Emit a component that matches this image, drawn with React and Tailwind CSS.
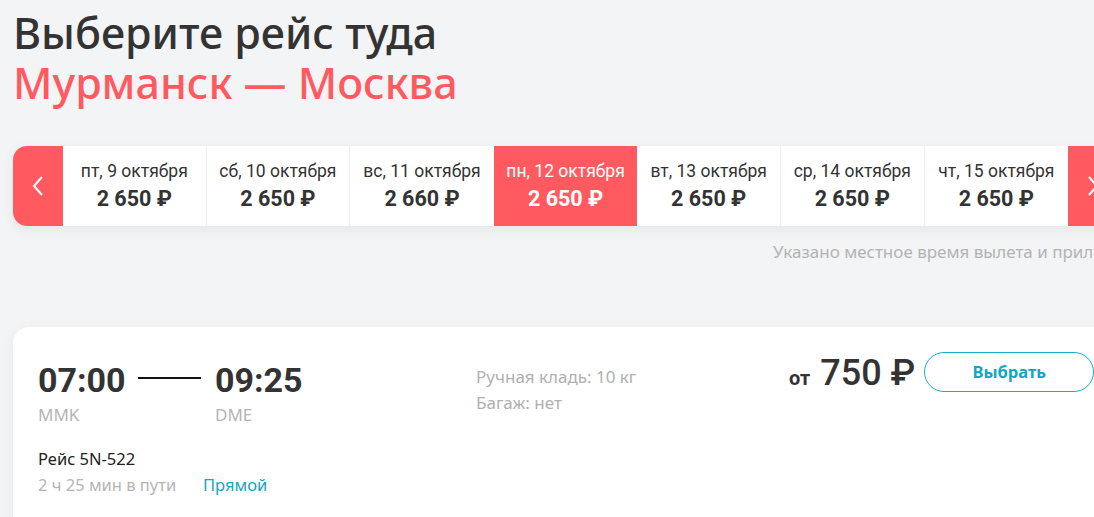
import React from "react";

const days = [
  { d: "пт, 9 октября", p: "2 650 ₽" },
  { d: "сб, 10 октября", p: "2 650 ₽" },
  { d: "вс, 11 октября", p: "2 660 ₽" },
  { d: "пн, 12 октября", p: "2 650 ₽", active: true },
  { d: "вт, 13 октября", p: "2 650 ₽" },
  { d: "ср, 14 октября", p: "2 650 ₽" },
  { d: "чт, 15 октября", p: "2 650 ₽" },
];

export default function App() {
  return (
    <div className="w-[1094px] h-[517px] overflow-hidden bg-[#f3f4f6]">
      <div className="w-[1106px] ml-[13px] pt-[8px]">
        <h1
          className="text-[43px] leading-[50px] font-medium text-[#333333]"
          style={{ fontFamily: "'Noto Sans', sans-serif" }}
        >
          Выберите рейс туда
        </h1>
        <div
          className="text-[43px] leading-[50px] font-medium text-[#ff5a5f]"
          style={{ fontFamily: "'Noto Sans', sans-serif" }}
        >
          Мурманск — Москва
        </div>

        <div className="mt-[38px] flex h-[80px] rounded-[14px] overflow-hidden bg-white shadow-[0_4px_14px_rgba(0,0,0,0.06)]">
          <button className="w-[50px] shrink-0 bg-[#ff5a5f] flex items-center justify-center">
            <svg width="14" height="22" viewBox="0 0 14 22" fill="none">
              <path d="M11 2L3 11L11 20" stroke="white" strokeWidth="2" />
            </svg>
          </button>
          {days.map((x, i) => (
            <div
              key={i}
              className={
                "w-[143.6px] shrink-0 flex flex-col items-center justify-center " +
                (x.active
                  ? "bg-[#ff5a5f] text-white"
                  : "bg-white text-[#333333] " + (i < 6 && !days[i + 1].active ? "border-r border-[#efefef]" : ""))
              }
              style={{ fontFamily: "Roboto, sans-serif" }}
            >
              <div className="text-[17.5px] leading-[20px]">{x.d}</div>
              <div className="text-[21.5px] leading-[26px] font-bold mt-[5px]">{x.p}</div>
            </div>
          ))}
          <button className="w-[50px] shrink-0 bg-[#ff5a5f] flex items-center justify-center">
            <svg width="14" height="22" viewBox="0 0 14 22" fill="none">
              <path d="M3 2L11 11L3 20" stroke="white" strokeWidth="2" />
            </svg>
          </button>
        </div>

        <div
          className="mt-[16px] pl-[760px] whitespace-nowrap text-[17px] leading-[20px] text-[#b3b3b3]"
          style={{ fontFamily: "'Noto Sans', sans-serif" }}
        >
          Указано местное время вылета и прилёта
        </div>

        <div
          className="mt-[65px] h-[220px] rounded-[16px] bg-white shadow-[0_4px_16px_rgba(0,0,0,0.05)] flex pl-[25px] pt-[34px]"
          style={{ fontFamily: "'Noto Sans', sans-serif" }}
        >
          <div className="w-[438px] shrink-0">
            <div className="flex items-center" style={{ fontFamily: "Roboto, sans-serif" }}>
              <div className="w-[77px]">
                <div className="text-[34px] leading-[38px] font-bold text-[#333333]">07:00</div>
              </div>
              <div className="ml-[23px] -mt-[5px] w-[63px] h-[2px] bg-[#111111]" />
              <div className="ml-[14px] text-[34px] leading-[38px] font-bold text-[#333333]">09:25</div>
            </div>
            <div className="flex mt-[6px] text-[17px] leading-[20px] text-[#b5b5b5]">
              <div className="w-[177px]">MMK</div>
              <div>DME</div>
            </div>
            <div className="mt-[24px] text-[16.5px] leading-[20px] text-[#222222]">Рейс 5N-522</div>
            <div className="mt-[6px] flex text-[16.5px] leading-[20px]">
              <span className="text-[#b5b5b5] w-[165px]">2 ч 25 мин в пути</span>
              <span className="text-[#12a6c4]">Прямой</span>
            </div>
          </div>
          <div className="w-[313px] shrink-0 pt-[3px] text-[17px] leading-[26px] text-[#b0b0b0]">
            <div>Ручная кладь: 10 кг</div>
            <div>Багаж: нет</div>
          </div>
          <div className="flex items-start -mt-[9px]">
            <div className="flex items-baseline text-[#333333] mt-[1px]" style={{ fontFamily: "Roboto, sans-serif" }}>
              <span className="text-[20px] font-bold">от</span>
              <span className="ml-[10px] text-[36px] leading-[40px] font-medium">750 ₽</span>
            </div>
            <button
              className="ml-[9px] w-[170px] h-[40px] rounded-full border border-[#12b0cc] text-[#12a6c4] text-[16.5px] font-bold flex items-center justify-center"
              style={{ fontFamily: "'Noto Sans', sans-serif" }}
            >
              Выбрать
            </button>
          </div>
        </div>
      </div>
    </div>
  );
}
